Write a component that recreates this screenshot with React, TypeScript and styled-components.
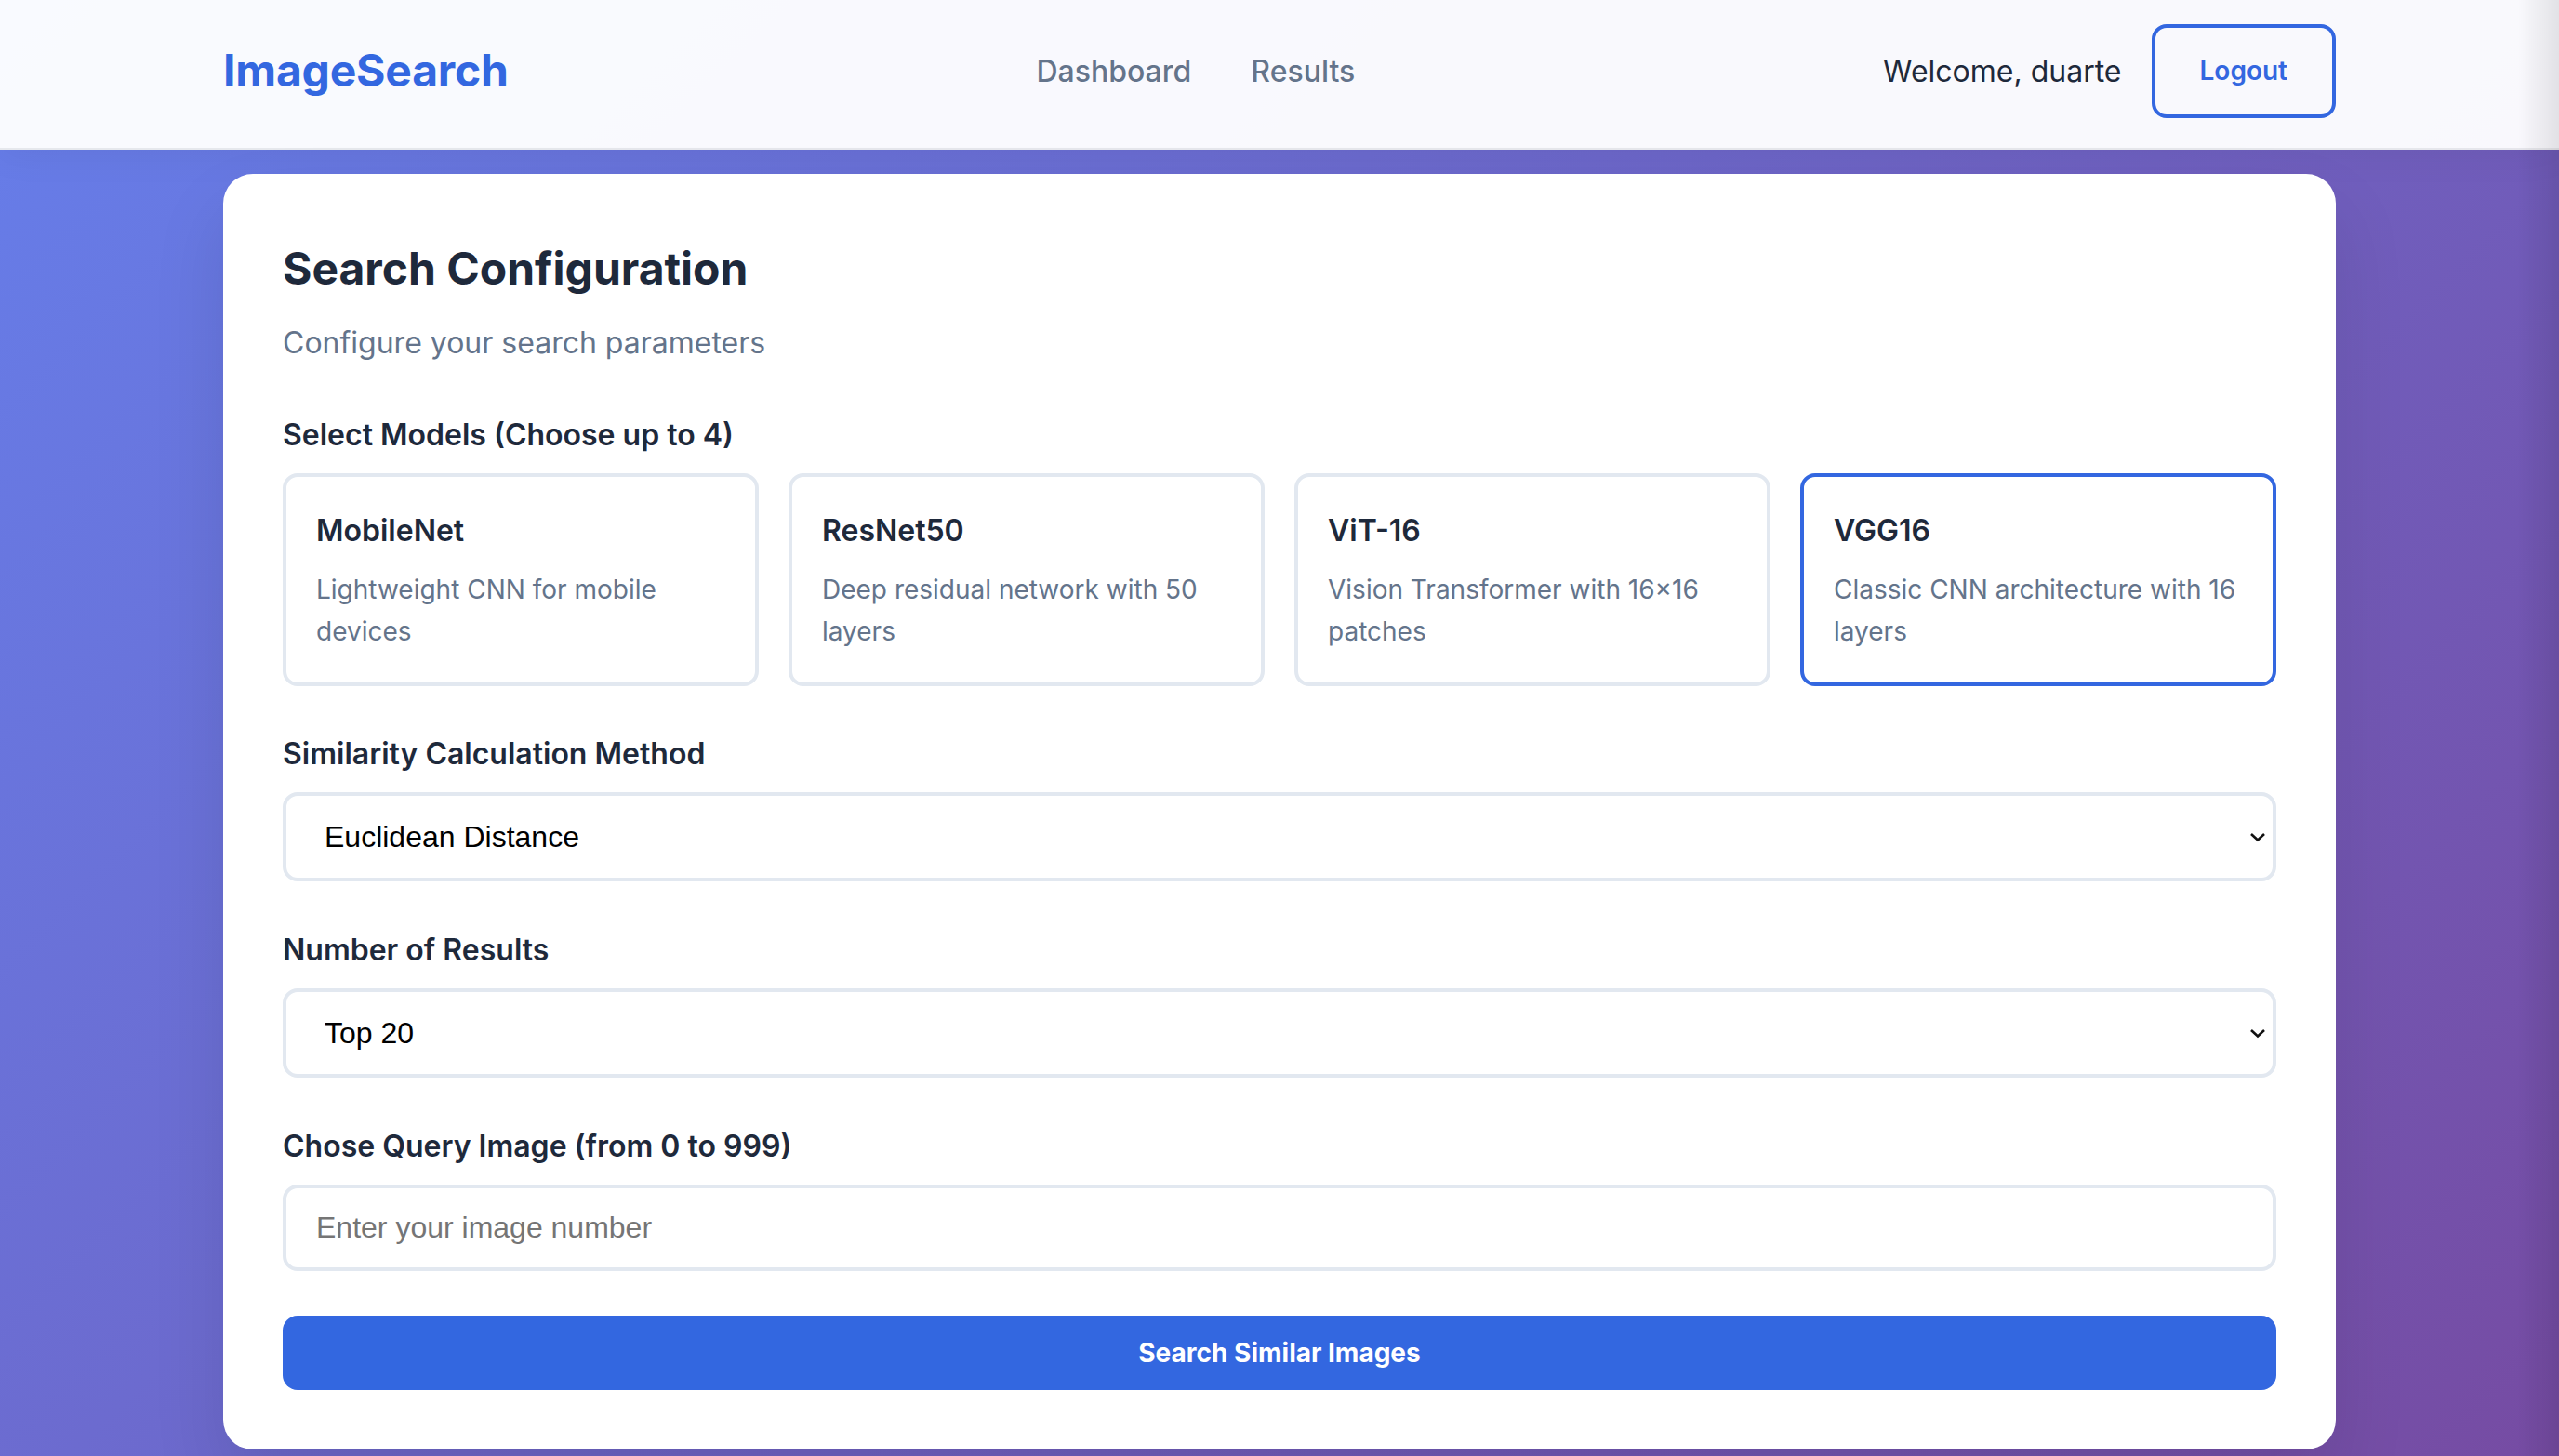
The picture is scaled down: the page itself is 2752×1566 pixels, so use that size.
import React from "react";
import styled, { createGlobalStyle } from "styled-components";

const BLUE = "#3367e0";
const DARK = "#1e293b";
const GRAY = "#64748b";
const BORDER = "#e2e8f0";

const GlobalStyle = createGlobalStyle`
  * { box-sizing: border-box; }
  html, body { margin: 0; padding: 0; }
  body {
    font-family: Inter, "Noto Sans", "Liberation Sans", sans-serif;
    line-height: 1.6;
    color: ${DARK};
    background: #764ba2;
  }
  body::after {
    content: "";
    position: fixed;
    top: 0;
    right: 0;
    bottom: 0;
    width: 44px;
    background: linear-gradient(to right, rgba(0,0,0,0), rgba(0,0,0,0.09));
    pointer-events: none;
  }
`;

const Page = styled.div`
  min-height: 100vh;
  background: linear-gradient(135deg, #667eea 0%, #764ba2 100%);
`;

const Header = styled.header`
  background: rgba(255, 255, 255, 0.96);
  border-bottom: 2px solid rgba(15, 23, 42, 0.08);
  box-shadow: 0 4px 40px rgba(0, 0, 0, 0.06);
`;

const HeaderInner = styled.div`
  max-width: 2400px;
  margin: 0 auto;
  padding: 26px 64px 32px;
  display: flex;
  align-items: center;
  justify-content: space-between;
`;

const Logo = styled.div`
  font-size: 48px;
  font-weight: 700;
  color: ${BLUE};
  letter-spacing: -0.2px;
`;

const Nav = styled.nav`
  display: flex;
  align-items: center;
  gap: 64px;
`;

const NavLink = styled.a`
  font-size: 32px;
  font-weight: 500;
  color: ${GRAY};
  text-decoration: none;
`;

const UserArea = styled.div`
  display: flex;
  align-items: center;
  gap: 32px;
`;

const Welcome = styled.span`
  font-size: 32px;
  color: ${DARK};
`;

const LogoutButton = styled.button`
  padding: 24px 48px;
  border: 4px solid ${BLUE};
  border-radius: 16px;
  background: transparent;
  color: ${BLUE};
  font-family: Inter, "Noto Sans", sans-serif;
  font-size: 28px;
  font-weight: 600;
  line-height: 1.6;
  cursor: pointer;
`;

const Main = styled.main`
  max-width: 2400px;
  margin: 0 auto;
  padding: 26px 64px 64px;
`;

const Card = styled.section`
  background: #ffffff;
  border-radius: 32px;
  padding: 64px;
  box-shadow: 0 40px 80px rgba(0, 0, 0, 0.1);
`;

const Title = styled.h2`
  margin: 0 0 15px;
  font-size: 48px;
  font-weight: 700;
  line-height: 1.6;
  color: ${DARK};
`;

const Subtitle = styled.p`
  margin: 0 0 48px;
  font-size: 32px;
  color: ${GRAY};
`;

const Label = styled.label`
  display: block;
  margin-bottom: 16px;
  font-size: 32px;
  font-weight: 600;
  color: ${DARK};
`;

const ModelGrid = styled.div`
  display: grid;
  grid-template-columns: repeat(4, 1fr);
  gap: 32px;
  margin-bottom: 47px;
`;

const ModelCard = styled.div<{ $selected?: boolean }>`
  border: 4px solid ${(p) => (p.$selected ? BLUE : BORDER)};
  border-radius: 16px;
  padding: 32px;
  background: #ffffff;
  cursor: pointer;
`;

const ModelName = styled.h3`
  margin: 0 0 16px;
  font-size: 32px;
  font-weight: 600;
  line-height: 1.6;
  color: ${DARK};
`;

const ModelDesc = styled.p`
  margin: 0;
  font-size: 28px;
  line-height: 1.6;
  color: ${GRAY};
`;

const FormGroup = styled.div`
  margin-bottom: 48px;
`;

const SelectWrap = styled.div`
  position: relative;
`;

const Select = styled.select`
  display: block;
  width: 100%;
  height: 96px;
  appearance: none;
  -webkit-appearance: none;
  padding: 0 64px 0 41px;
  border: 4px solid ${BORDER};
  border-radius: 16px;
  background: #ffffff;
  color: #000000;
  font-family: "Liberation Sans", Arial, sans-serif;
  font-size: 32px;
  outline: none;
`;

const Chevron = styled.svg`
  position: absolute;
  right: 11px;
  top: 50%;
  width: 18px;
  height: 12px;
  transform: translateY(-50%);
  pointer-events: none;
`;

const Input = styled.input`
  display: block;
  width: 100%;
  height: 93px;
  padding: 0 32px;
  border: 4px solid ${BORDER};
  border-radius: 16px;
  background: #ffffff;
  color: #000000;
  font-family: "Liberation Sans", Arial, sans-serif;
  font-size: 32px;
  outline: none;
  &::placeholder {
    color: #757575;
  }
`;

const SubmitButton = styled.button`
  display: block;
  width: 100%;
  height: 80px;
  border: none;
  border-radius: 16px;
  background: ${BLUE};
  color: #ffffff;
  font-family: Inter, "Noto Sans", sans-serif;
  font-size: 28px;
  font-weight: 700;
  cursor: pointer;
`;

const models = [
  { name: "MobileNet", desc: "Lightweight CNN for mobile devices" },
  { name: "ResNet50", desc: "Deep residual network with 50 layers" },
  { name: "ViT-16", desc: "Vision Transformer with 16×16 patches" },
  { name: "VGG16", desc: "Classic CNN architecture with 16 layers", selected: true },
];

const ChevronIcon = () => (
  <Chevron viewBox="0 0 18 12">
    <path d="M2 3 L9 9.5 L16 3" fill="none" stroke="#111" strokeWidth="2.6" strokeLinecap="butt" strokeLinejoin="miter" />
  </Chevron>
);

export default function App() {
  return (
    <>
      <GlobalStyle />
      <Page>
        <Header>
          <HeaderInner>
            <Logo>ImageSearch</Logo>
            <Nav>
              <NavLink href="#">Dashboard</NavLink>
              <NavLink href="#">Results</NavLink>
            </Nav>
            <UserArea>
              <Welcome>Welcome, duarte</Welcome>
              <LogoutButton>Logout</LogoutButton>
            </UserArea>
          </HeaderInner>
        </Header>
        <Main>
          <Card>
            <Title>Search Configuration</Title>
            <Subtitle>Configure your search parameters</Subtitle>

            <Label>Select Models (Choose up to 4)</Label>
            <ModelGrid>
              {models.map((m) => (
                <ModelCard key={m.name} $selected={m.selected}>
                  <ModelName>{m.name}</ModelName>
                  <ModelDesc>{m.desc}</ModelDesc>
                </ModelCard>
              ))}
            </ModelGrid>

            <FormGroup>
              <Label>Similarity Calculation Method</Label>
              <SelectWrap>
                <Select defaultValue="euclidean">
                  <option value="euclidean">Euclidean Distance</option>
                  <option value="cosine">Cosine Similarity</option>
                  <option value="manhattan">Manhattan Distance</option>
                </Select>
                <ChevronIcon />
              </SelectWrap>
            </FormGroup>

            <FormGroup>
              <Label>Number of Results</Label>
              <SelectWrap>
                <Select defaultValue="20">
                  <option value="10">Top 10</option>
                  <option value="20">Top 20</option>
                  <option value="50">Top 50</option>
                </Select>
                <ChevronIcon />
              </SelectWrap>
            </FormGroup>

            <FormGroup>
              <Label>Chose Query Image (from 0 to 999)</Label>
              <Input type="number" placeholder="Enter your image number" />
            </FormGroup>

            <SubmitButton>Search Similar Images</SubmitButton>
          </Card>
        </Main>
      </Page>
    </>
  );
}
